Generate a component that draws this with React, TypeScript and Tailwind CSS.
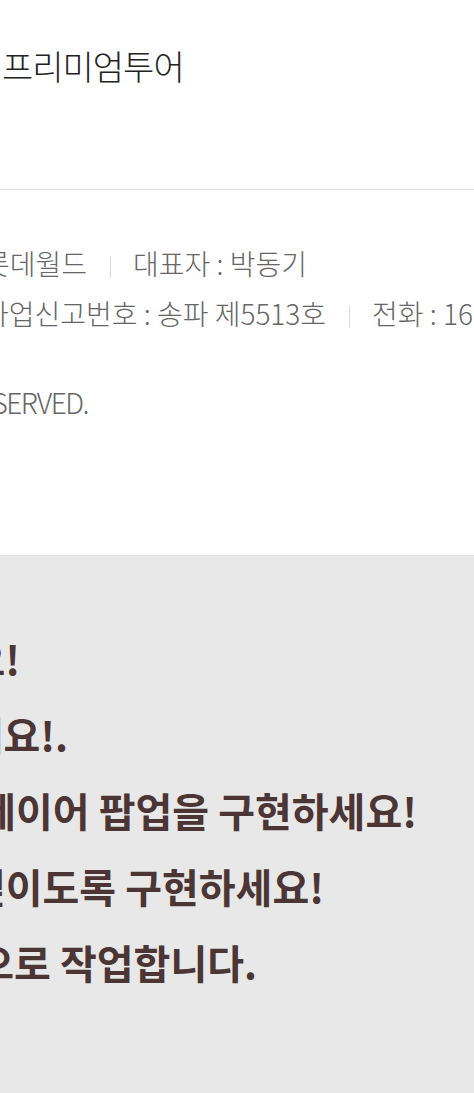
import React from "react";

function Sep() {
  return <span className="inline-block w-px h-[22px] bg-[#dadada] ml-[23px] mr-[22px] align-middle" />;
}

function BoldLine({ w, text }: { w: string; text: string }) {
  return (
    <div className={`flex justify-end ${w}`}>
      <span className="shrink-0 whitespace-nowrap">{text}</span>
    </div>
  );
}

export default function App() {
  return (
    <div className="w-[474px] h-[1093px] overflow-hidden bg-white font-['Noto_Sans_CJK_KR','Noto_Sans',sans-serif]">
      <header className="h-[190px] border-b border-[#dcdcdc] pt-[46px]">
        <h1 className="ml-[2px] whitespace-nowrap text-[34px] leading-[40px] tracking-[-1px] font-light text-[#222]">
          프리미엄투어
        </h1>
      </header>

      <footer className="h-[365px] pt-[48px] text-[28px] leading-[50px] font-light text-[#666]">
        <div className="-ml-[16px] whitespace-nowrap">
          롯데월드<Sep />대표자 : 박동기
        </div>
        <div className="-ml-[17px] whitespace-nowrap">
          사업신고번호 : 송파 제5513호<Sep />전화 : 1661-2000
        </div>
        <div className="mt-[39px] flex justify-end w-[88px]">
          <span className="shrink-0 whitespace-nowrap tracking-[-1.5px]">
            COPYRIGHT © LOTTE WORLD. ALL RIGHTS RESERVED.
          </span>
        </div>
      </footer>

      <section className="h-[538px] bg-[#e8e8e8] pt-[65px] text-[40px] leading-[76px] font-bold text-[#4b3535]">
        <BoldLine w="w-[20px]" text="모바일 화면에 맞게 제작하세요!" />
        <BoldLine w="w-[68px]" text="웹 접근성을 고려하여 마크업하세요!." />
        <BoldLine w="w-[417px]" text="버튼을 누르면 레이어 팝업을 구현하세요!" />
        <BoldLine w="w-[324px]" text="팝업이 열리면 화면 전체가 덮이도록 구현하세요!" />
        <BoldLine w="w-[257px]" text="모든 기능은 바닐라 자바스크립트 방식으로 작업합니다." />
      </section>
    </div>
  );
}
